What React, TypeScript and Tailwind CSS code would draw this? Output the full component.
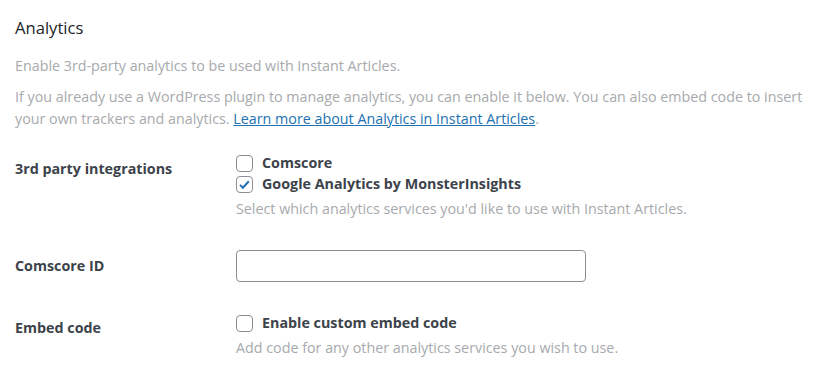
import React from "react";

function Checkbox({ checked }: { checked?: boolean }) {
  return (
    <span className="flex h-[17px] w-[17px] shrink-0 items-center justify-center rounded-[4px] border border-[#8c8f94] bg-white">
      {checked && (
        <svg viewBox="0 0 20 20" className="h-[17px] w-[17px]">
          <path d="M4 10.5l3.8 3.8 8-8.6" fill="none" stroke="#2271b1" strokeWidth="2.6" />
        </svg>
      )}
    </span>
  );
}

export default function App() {
  return (
    <div className="min-h-[383px] bg-white px-[15px] pt-[16px] text-[14.3px] font-['Open_Sans',sans-serif]">
      {/* Header */}
      <h2 className="text-[16.6px] leading-[24px] text-[#1d2327]">Analytics</h2>
      <p className="mt-[15px] leading-[22px] text-[#a7aaad]">
        Enable 3rd-party analytics to be used with Instant Articles.
      </p>
      <p className="mt-[9px] max-w-[790px] leading-[22px] text-[#a7aaad]">
        If you already use a WordPress plugin to manage analytics, you can enable it below. You can also embed code to insert
        your own trackers and analytics.{" "}
        <a className="text-[#2271b1] underline">Learn more about Analytics in Instant Articles</a>.
      </p>

      {/* 3rd party integrations */}
      <div className="mt-[23px] flex">
        <div className="w-[221px] pt-[6px] font-bold leading-[20px] text-[#3c434a]">3rd party integrations</div>
        <div className="flex flex-col">
          <label className="flex h-[20px] items-center gap-[9px]">
            <Checkbox />
            <span className="font-bold text-[#3c434a]">Comscore</span>
          </label>
          <label className="mt-[1px] flex h-[20px] items-center gap-[9px]">
            <Checkbox checked />
            <span className="font-bold text-[#3c434a]">Google Analytics by MonsterInsights</span>
          </label>
          <p className="mt-[5px] leading-[20px] text-[#a7aaad]">
            Select which analytics services you'd like to use with Instant Articles.
          </p>
        </div>
      </div>

      {/* Comscore ID */}
      <div className="mt-[31px] flex items-center">
        <div className="w-[221px] font-bold text-[#3c434a]">Comscore ID</div>
        <input className="h-[32px] w-[350px] rounded-[4px] border border-[#8c8f94] bg-white" />
      </div>

      {/* Embed code */}
      <div className="mt-[31px] flex">
        <div className="w-[221px] pt-[5px] font-bold leading-[20px] text-[#3c434a]">Embed code</div>
        <div className="flex flex-col">
          <label className="flex h-[20px] items-center gap-[9px]">
            <Checkbox />
            <span className="font-bold text-[#3c434a]">Enable custom embed code</span>
          </label>
          <p className="mt-[5px] leading-[20px] text-[#a7aaad]">
            Add code for any other analytics services you wish to use.
          </p>
        </div>
      </div>
    </div>
  );
}
